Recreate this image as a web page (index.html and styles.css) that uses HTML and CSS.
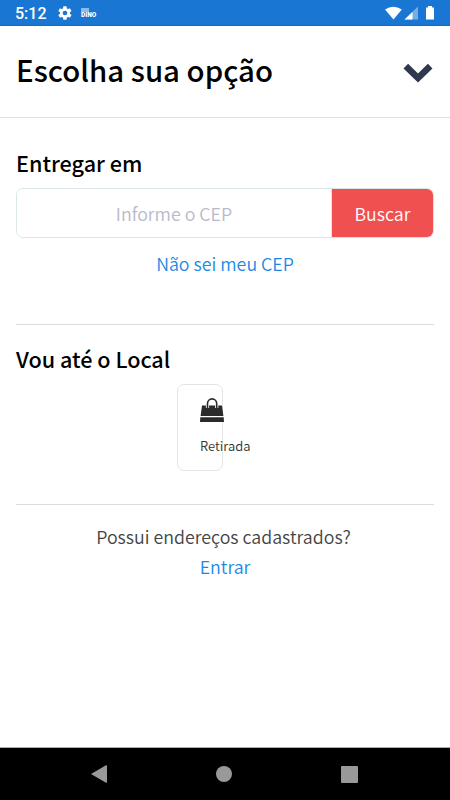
FILE: index.html
```html
<!DOCTYPE html>
<html lang="pt-BR">
<head>
  <meta charset="UTF-8" />
  <title>Escolha sua opção</title>
  <meta name="viewport" content="width=device-width, initial-scale=1.0"/>
  <link rel="stylesheet" href="styles.css">
</head>
<body>
  <div class="status-bar">
    <span class="clock">5:12</span>
    <svg class="gear" width="16" height="16" viewBox="0 0 24 24"><path fill="#fff" d="M19.4 13a7.500 7.500 0 0 0 0-2l2.100-1.600c.2-.2.300-.4.100-.7l-2-3.400c-.1-.2-.4-.3-.6-.2l-2.500 1a7 7 0 0 0-1.700-1l-.4-2.600c0-.3-.2-.5-.5-.5h-4c-.3 0-.5.200-.5.500L9 5.100a7 7 0 0 0-1.700 1l-2.500-1c-.2-.1-.5 0-.6.200l-2 3.400c-.1.300-.1.500.1.700L4.500 11a7.500 7.500 0 0 0 0 2l-2.200 1.600c-.2.200-.2.400-.1.700l2 3.400c.1.200.4.300.6.200l2.500-1a7 7 0 0 0 1.700 1l.4 2.600c0 .3.200.5.500.5h4c.3 0 .5-.2.500-.5l.4-2.600a7 7 0 0 0 1.700-1l2.500 1c.2.100.5 0 .6-.2l2-3.400c.2-.3.100-.5-.1-.7zM12 15.500a3.500 3.500 0 1 1 0-7 3.500 3.500 0 0 1 0 7z"/></svg>
    <span class="dino"><i></i>DINO</span>
    <svg class="signals" width="52" height="16" viewBox="0 0 52 16">
      <path fill="#fff" d="M1 4.500Q9.300-1 17.800 4.500L9.500 14.500z"/>
      <path fill="#74aee6" d="M34 1.500v13H20.500z"/>
      <path fill="#fff" d="M28.500 7v7.500h-8z"/>
      <path fill="#fff" d="M44 1h4v1.500h2v12h-8v-12h2z"/>
    </svg>
  </div>

  <header class="header">
    <h1>Escolha sua opção</h1>
    <svg width="30" height="20" viewBox="0 0 30 20"><path d="M2.800 3.200L15 15L27.200 3.200" fill="none" stroke="#30384f" stroke-width="6.600"/></svg>
  </header>

  <main class="content">
    <section class="delivery">
      <h2>Entregar em</h2>
      <div class="search">
        <input class="cep" type="text" placeholder="Informe o CEP">
        <button class="search-btn">Buscar</button>
      </div>
      <a class="link">Não sei meu CEP</a>
    </section>

    <section class="pickup">
      <h2>Vou até o Local</h2>
      <div class="option">
        <svg width="24" height="25" viewBox="0 0 24 25">
          <path fill="#2b2b2b" d="M2 7.500h20L23.400 18H.6z"/>
          <path fill="#2b2b2b" d="M.3 19.300h23.400L24 24H0z"/>
          <path d="M7.500 10V5.500a4.600 4.600 0 0 1 9.200 0V10" fill="none" stroke="#fff" stroke-width="3.200"/>
          <path d="M7.500 10V5.500a4.600 4.600 0 0 1 9.200 0V10" fill="none" stroke="#2b2b2b" stroke-width="1.600"/>
        </svg>
        <span>Retirada</span>
      </div>
    </section>

    <section class="login">
      <p>Possui endereços cadastrados?</p>
      <a class="link">Entrar</a>
    </section>
  </main>

  <nav class="nav-bar">
    <svg width="16" height="18" viewBox="0 0 16 18"><path fill="#999" d="M0 9L15 .3Q16 0 16 1v16q0 1-1 .7z"/></svg>
    <i class="home"></i>
    <i class="recent"></i>
  </nav>
</body>
</html>
```
FILE: styles.css
```css
* { box-sizing: border-box; }
body {
  margin: 0; height: 800px; background: #fff; color: #000; overflow: hidden;
  font-family: "Noto Sans CJK JP", "Noto Sans", sans-serif;
  display: flex; flex-direction: column;
}
h1, h2, p { margin: 0; }
svg { display: block; flex: none; }

.status-bar {
  height: 26px; flex: none; background: #1976d2; color: #fff; border-bottom: 1px solid #1569c0;
  display: flex; align-items: center; padding: 0 14px 0 15px;
}
.clock { font: 500 16px/26px Roboto, sans-serif; width: 42px; padding-top: 2px; }
.dino { position: relative; margin-left: 8px; padding-top: 4px; font: 900 6.500px/8px Roboto, sans-serif; }
.dino i { position: absolute; left: 0; top: 1px; width: 8px; height: 4px; background: #8dbcea; }
.signals { margin-left: auto; }

.header {
  height: 92px; flex: none; border-bottom: 1px solid #e0e0e0;
  display: flex; align-items: center; justify-content: space-between; padding: 0 17px 0 16px;
}
.header svg { margin-top: 2px; }
h1 { font-size: 29.400px; font-weight: 500; line-height: 40px; padding-bottom: 6px; }

.content { flex: 1; padding: 30px 16px 0; }
h2 { font-size: 21.600px; font-weight: 500; line-height: 30px; }
.delivery { height: 176px; }
.search { display: flex; height: 50px; margin-top: 10px; border: 1px solid #dce6e9; border-radius: 7px; overflow: hidden; }
.cep {
  flex: 1; min-width: 0; border: 0; border-right: 1px solid #dce6e9; padding: 0 0 1px; outline: none;
  font: 350 17.800px/28px "Noto Sans CJK JP", sans-serif; text-align: center;
}
.cep::placeholder { color: #b9b9cb; opacity: 1; }
.search-btn {
  width: 101px; border: 0; padding: 0 0 1px; background: #f05050; color: #fff;
  font: 350 17.800px/28px "Noto Sans CJK JP", sans-serif;
}
.link { display: block; text-align: center; color: #1e88e5; font-size: 17.800px; font-weight: 350; line-height: 30px; }
.delivery .link { margin-top: 10px; }

.pickup { height: 180px; border-top: 1px solid #dcdcdc; padding-top: 19px; }
.option {
  width: 46px; height: 87px; margin: 10px 0 0 161px; padding: 14px 0 0 22px;
  border: 1px solid #e4e4e4; border-radius: 7px; color: #333; font-size: 13px; line-height: 20px;
}
.option svg { margin-top: -1px; }
.option span { display: block; margin-top: 13px; font-weight: 350; }

.login { border-top: 1px solid #dcdcdc; padding-top: 16px; text-align: center; }
.login p { color: #444; font-size: 17.800px; font-weight: 350; line-height: 30px; margin-left: -3px; }

.nav-bar {
  height: 53px; flex: none; background: #000; border-top: 1px solid #aaa;
  display: flex; align-items: center; justify-content: space-between; padding: 0 92px 0 91px;
}
.home { width: 16px; height: 16px; border-radius: 50%; background: #999; }
.recent { width: 17px; height: 17px; border-radius: 1px; background: #999; }
```
